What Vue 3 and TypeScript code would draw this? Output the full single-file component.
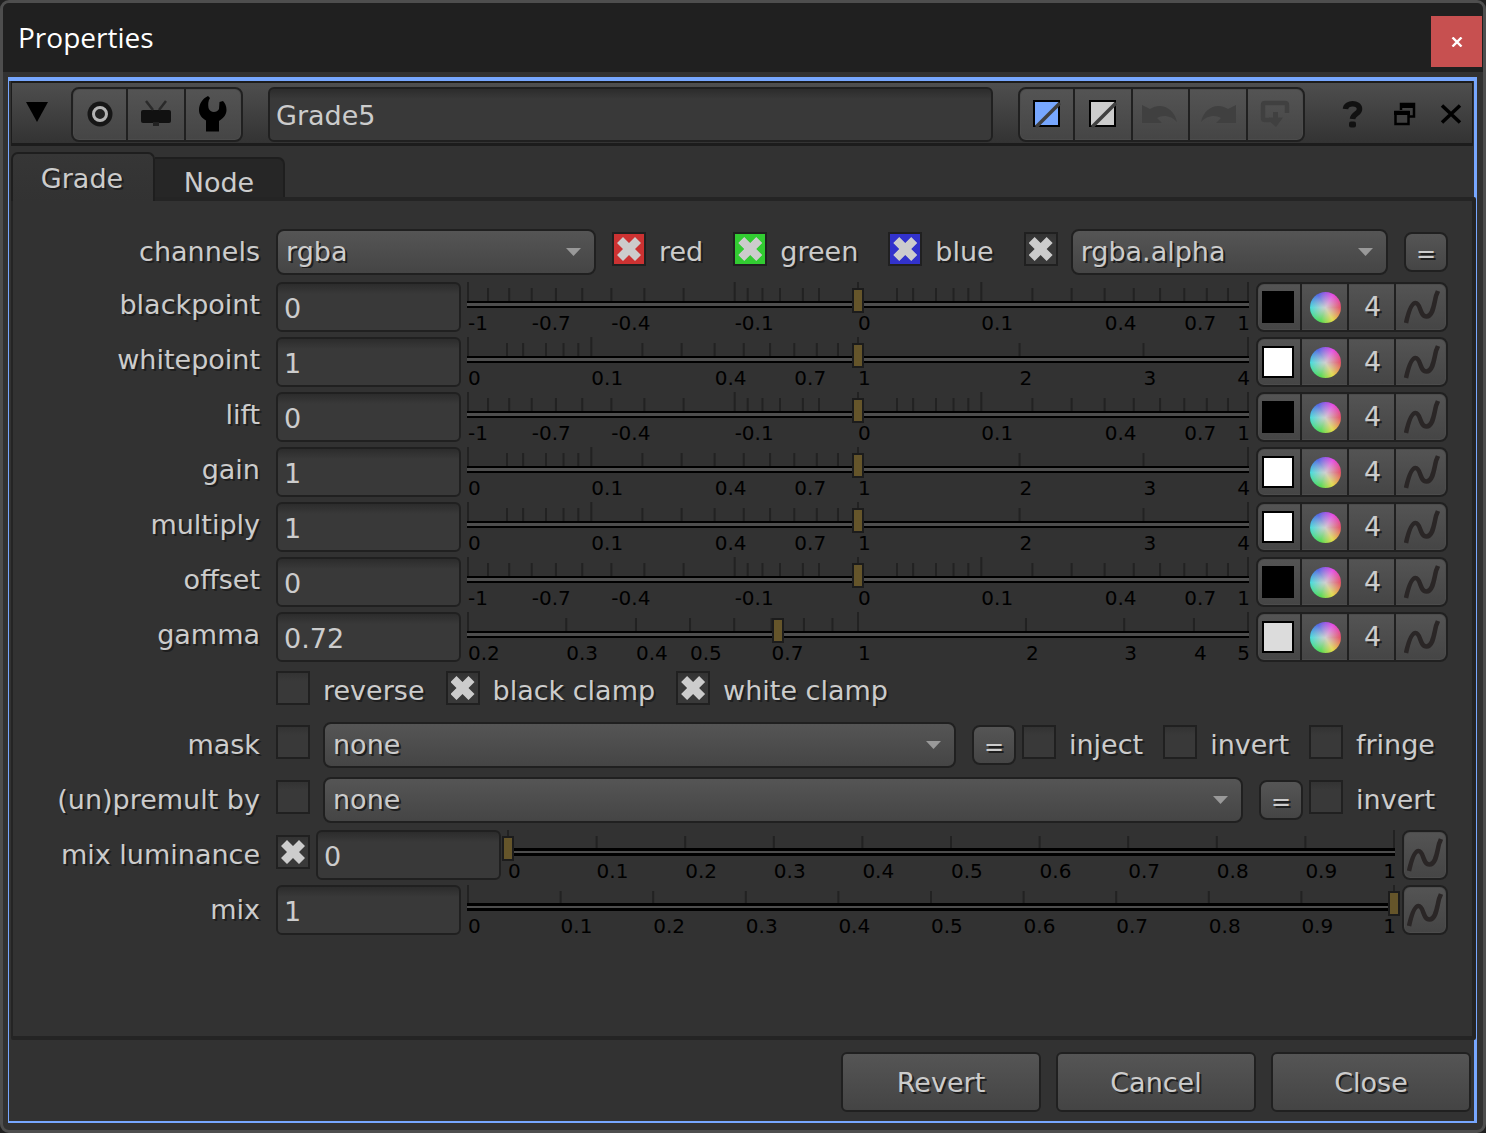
<script setup lang="ts">
import { reactive, ref } from 'vue'

type Scale = (v: number) => number
interface Axis {
  pos: Scale
  ticks: number[]
  tall: number[]
  labels: number[]
}
interface Knob {
  name: string
  value: string
  axis: Axis
  swatch: string
}

const signedRoot: Scale = (v) => 0.5 + (Math.sign(v) * Math.sqrt(Math.abs(v))) / 2
const root: Scale = (v) => Math.sqrt(v) / 2
const log5: Scale = (v) => 0.5 + Math.log(v) / Math.log(5) / 2
const linear: Scale = (v) => v

const minor = [0.01, 0.02, 0.04, 0.06, 0.08, 0.2, 0.3, 0.4, 0.5, 0.6, 0.7, 0.8, 0.9]

const offsetAxis: Axis = {
  pos: signedRoot,
  ticks: [...minor, ...minor.map((v) => -v)],
  tall: [-1, -0.1, 0, 0.1, 1],
  labels: [-1, -0.7, -0.4, -0.1, 0, 0.1, 0.4, 0.7, 1],
}
const gainAxis: Axis = {
  pos: root,
  ticks: [...minor, 2, 3],
  tall: [0, 0.1, 1, 4],
  labels: [0, 0.1, 0.4, 0.7, 1, 2, 3, 4],
}
const gammaAxis: Axis = {
  pos: log5,
  ticks: [0.3, 0.4, 0.5, 0.6, 0.7, 0.8, 0.9, 2, 3, 4],
  tall: [0.2, 1, 5],
  labels: [0.2, 0.3, 0.4, 0.5, 0.7, 1, 2, 3, 4, 5],
}
const tenths = [0.1, 0.2, 0.3, 0.4, 0.5, 0.6, 0.7, 0.8, 0.9]
const mixAxis: Axis = {
  pos: linear,
  ticks: tenths,
  tall: [0, 1],
  labels: [0, ...tenths, 1],
}

const knobs = reactive<Knob[]>([
  { name: 'blackpoint', value: '0', axis: offsetAxis, swatch: '#000' },
  { name: 'whitepoint', value: '1', axis: gainAxis, swatch: '#fff' },
  { name: 'lift', value: '0', axis: offsetAxis, swatch: '#000' },
  { name: 'gain', value: '1', axis: gainAxis, swatch: '#fff' },
  { name: 'multiply', value: '1', axis: gainAxis, swatch: '#fff' },
  { name: 'offset', value: '0', axis: offsetAxis, swatch: '#000' },
  { name: 'gamma', value: '0.72', axis: gammaAxis, swatch: '#dcdcdc' },
])
const mixes = reactive([
  { id: 'mix-luminance', name: 'mix luminance', value: '0', toggle: true },
  { id: 'mix', name: 'mix', value: '1', toggle: false },
])

const nodeName = ref('Grade5')
const channels = [
  { name: 'red', cls: 'is-red' },
  { name: 'green', cls: 'is-green' },
  { name: 'blue', cls: 'is-blue' },
]
const clamps = [
  { name: 'reverse', on: false },
  { name: 'black clamp', on: true },
  { name: 'white clamp', on: true },
]
const pct = (axis: Axis, v: number) => `${axis.pos(v) * 100}%`
const thumb = (axis: Axis, v: string) => Math.round(axis.pos(Number(v)) * 1000)
</script>

<template>
  <main class="window">
    <header class="titlebar">
      <h1>Properties</h1>
      <button class="win-close" aria-label="Close window">
        <svg width="12" height="10" viewBox="0 0 12 10"><path d="M1.500 0.500L10.500 9.500M10.500 0.500L1.500 9.500" stroke="#fff" stroke-width="2.400" /></svg>
      </button>
    </header>

    <section class="frame">
      <div class="toolbar">
        <button class="plain fold" aria-label="Collapse">
          <svg width="22" height="20" viewBox="0 0 22 20"><path d="M0 0H22L11 20Z" /></svg>
        </button>
        <div class="group tools">
          <button aria-label="Center node">
            <svg width="26" height="26" viewBox="0 0 26 26"><circle cx="13" cy="13" r="12.500" fill="#161616" /><circle cx="13" cy="13" r="6.500" fill="#222" stroke="#b4b4b4" stroke-width="3" /></svg>
          </button>
          <button aria-label="Viewer">
            <svg width="32" height="28" viewBox="0 0 32 28"><rect x="1" y="10" width="30" height="13" rx="2" fill="#111" /><path d="M6 1L13 10M26 1L19 10" stroke="#2a2a2a" stroke-width="2.500" /><rect x="13" y="22" width="6" height="4" fill="#222" /></svg>
          </button>
          <button aria-label="Settings">
            <svg width="28" height="36" viewBox="0 0 28 36"><path d="M9 0C3 3 0 8 0 14C0 19 3 22 7 24.500V35.500H20V25C25 22 27.500 18 27.500 14C27.500 10 26 7 24 5L20.500 6L20 13C18 17 11 17 9.500 12C9 8 9 5 11 2Z" /></svg>
          </button>
        </div>
        <input v-model="nodeName" class="field name" type="text" aria-label="Node name" />
        <div class="group history">
          <button aria-label="Node colour">
            <svg width="28" height="28" viewBox="0 0 28 28"><rect x="1" y="1" width="25" height="25" fill="#77a7ff" stroke="#000" stroke-width="2" /><path d="M3 27L27 3" stroke="#404040" stroke-width="3.500" /></svg>
          </button>
          <button aria-label="Viewer colour">
            <svg width="28" height="28" viewBox="0 0 28 28"><rect x="1" y="1" width="25" height="25" fill="#ccc" stroke="#000" stroke-width="2" /><path d="M3 27L27 3" stroke="#404040" stroke-width="3.500" /></svg>
          </button>
          <button aria-label="Undo" disabled>
            <svg width="36" height="20" viewBox="0 0 36 20"><path d="M0 1L8 5C19 -2 32 4 35 18C30 12 21 10 15 14L20 19H0Z" fill="#404040" /></svg>
          </button>
          <button aria-label="Redo" disabled>
            <svg width="36" height="20" viewBox="0 0 36 20"><path d="M36 1L28 5C17 -2 4 4 1 18C6 12 15 10 21 14L16 19H36Z" fill="#404040" /></svg>
          </button>
          <button aria-label="Revert knobs" disabled>
            <svg width="30" height="28" viewBox="0 0 30 28"><path d="M10 20H5Q3 20 3 18V5Q3 3 5 3H25Q27 3 27 5V13" fill="none" stroke="#404040" stroke-width="4.500" /><path d="M13 12H18V17.500H23L16 27L9 21V17.500H13Z" fill="#404040" /></svg>
          </button>
        </div>
        <button class="plain help" aria-label="Help">
          <svg width="22" height="28" viewBox="0 0 22 28"><path d="M3.500 9C4 2 17.500 2 17.500 9C17.500 14 11 13.500 10.500 19" fill="none" stroke="#111" stroke-width="5.500" /><rect x="7" y="21.500" width="7" height="6" rx="2" fill="#111" /></svg>
        </button>
        <button class="plain" aria-label="Float panel">
          <svg width="22" height="24" viewBox="0 0 22 24"><path d="M7 8V2H20V14.500H15" fill="none" stroke="#000" stroke-width="2.500" /><path d="M6 1H21V6H6Z" /><rect x="1.500" y="10" width="13" height="12" fill="#404040" stroke="#000" stroke-width="2.500" /><path d="M0 9H16V13H0Z" /></svg>
        </button>
        <button class="plain" aria-label="Close panel">
          <svg width="22" height="20" viewBox="0 0 22 20"><path d="M2 1.500L20 18.500M20 1.500L2 18.500" stroke="#000" stroke-width="3.500" /></svg>
        </button>
      </div>

      <div class="tabs" role="tablist">
        <button class="tab active" role="tab" aria-selected="true">Grade</button>
        <button class="tab" role="tab" aria-selected="false">Node</button>
      </div>

      <div class="pane" role="tabpanel">
        <div class="row">
          <label class="caption" for="channels">channels</label>
          <div class="controls">
            <div class="combo layer">
              <select id="channels"><option>rgba</option></select>
              <svg class="arrow" width="15" height="8" viewBox="0 0 15 8"><path d="M0 0H15L7.500 8Z" /></svg>
            </div>
            <div class="channel-set">
              <label v-for="c in channels" :key="c.name" class="check">
                <input type="checkbox" checked :class="c.cls" />{{ c.name }}
              </label>
              <label class="check"><input type="checkbox" checked aria-label="alpha enabled" /></label>
            </div>
            <div class="combo grow">
              <select aria-label="alpha channel"><option>rgba.alpha</option></select>
              <svg class="arrow" width="15" height="8" viewBox="0 0 15 8"><path d="M0 0H15L7.500 8Z" /></svg>
            </div>
            <button class="expr">=</button>
          </div>
        </div>

        <div v-for="k in knobs" :key="k.name" class="row knob">
          <label class="caption" :for="'knob-' + k.name">{{ k.name }}</label>
          <div class="controls">
            <input :id="'knob-' + k.name" v-model="k.value" class="field value" type="text" />
            <div class="slider">
              <svg class="ticks" aria-hidden="true">
                <rect v-for="t in k.axis.ticks" :key="'s' + t" :x="pct(k.axis, t)" y="6" width="2" height="13" />
                <rect v-for="t in k.axis.tall" :key="'t' + t" :x="pct(k.axis, t)" y="0" width="2" height="19" />
              </svg>
              <div class="groove"></div>
              <span v-for="t in k.axis.labels" :key="t" class="num" :style="{ left: pct(k.axis, t) }">{{ t }}</span>
              <input type="range" min="0" max="1000" :value="thumb(k.axis, k.value)" :aria-label="k.name + ' slider'" :aria-valuetext="k.value" />
            </div>
            <div class="group pickers">
              <button :aria-label="k.name + ' colour'"><i class="swatch" :style="{ background: k.swatch }"></i></button>
              <button :aria-label="k.name + ' colour wheel'"><i class="wheel"></i></button>
              <button>4</button>
              <button :aria-label="k.name + ' animation'">
                <svg width="36" height="34" viewBox="0 0 36 34"><path class="curve" d="M2 33C4 24 7 13 11.500 13C17 13 15.500 26.500 22.500 26.500C29 26.500 30 14 32 6L34 1" /></svg>
              </button>
            </div>
          </div>
        </div>

        <div class="row short">
          <span></span>
          <div class="controls clamps">
            <label v-for="c in clamps" :key="c.name" class="check"><input type="checkbox" :checked="c.on" />{{ c.name }}</label>
          </div>
        </div>

        <div class="row">
          <label class="caption" for="mask">mask</label>
          <div class="controls">
            <label class="check lead"><input type="checkbox" aria-label="mask enabled" /></label>
            <div class="combo grow">
              <select id="mask"><option>none</option></select>
              <svg class="arrow" width="15" height="8" viewBox="0 0 15 8"><path d="M0 0H15L7.500 8Z" /></svg>
            </div>
            <button class="expr">=</button>
            <div class="trail">
              <label class="check"><input type="checkbox" />inject</label>
              <label class="check"><input type="checkbox" />invert</label>
              <label class="check"><input type="checkbox" />fringe</label>
            </div>
          </div>
        </div>

        <div class="row">
          <label class="caption" for="premult">(un)premult by</label>
          <div class="controls">
            <label class="check lead"><input type="checkbox" aria-label="premult enabled" /></label>
            <div class="combo grow">
              <select id="premult"><option>none</option></select>
              <svg class="arrow" width="15" height="8" viewBox="0 0 15 8"><path d="M0 0H15L7.500 8Z" /></svg>
            </div>
            <button class="expr">=</button>
            <div class="trail">
              <label class="check"><input type="checkbox" /><span class="wide">invert</span></label>
            </div>
          </div>
        </div>

        <div v-for="m in mixes" :key="m.id" class="row">
          <label class="caption" :for="m.id">{{ m.name }}</label>
          <div class="controls">
            <label v-if="m.toggle" class="check tight"><input type="checkbox" checked aria-label="mix luminance enabled" /></label>
            <input :id="m.id" v-model="m.value" class="field value" type="text" />
            <div class="slider fine">
              <svg class="ticks" aria-hidden="true">
                <rect v-for="t in mixAxis.ticks" :key="t" :x="pct(mixAxis, t)" y="6" width="2" height="12" />
                <rect v-for="t in mixAxis.tall" :key="'t' + t" :x="pct(mixAxis, t)" y="0" width="2" height="18" />
              </svg>
              <div class="groove"></div>
              <span v-for="t in mixAxis.labels" :key="t" class="num" :style="{ left: pct(mixAxis, t) }">{{ t }}</span>
              <input type="range" min="0" max="1000" :value="thumb(mixAxis, m.value)" :aria-label="m.name + ' slider'" :aria-valuetext="m.value" />
            </div>
            <div class="group anim">
              <button :aria-label="m.name + ' animation'">
                <svg width="36" height="34" viewBox="0 0 36 34"><path class="curve" d="M2 33C4 24 7 13 11.500 13C17 13 15.500 26.500 22.500 26.500C29 26.500 30 14 32 6L34 1" /></svg>
              </button>
            </div>
          </div>
        </div>
      </div>

      <footer class="actions">
        <button>Revert</button>
        <button>Cancel</button>
        <button>Close</button>
      </footer>
    </section>
  </main>
</template>

<style>
body {
  margin: 0;
  background: #202020;
}
</style>

<style scoped>
* {
  box-sizing: border-box;
}
.window {
  display: flex;
  flex-direction: column;
  min-height: 100vh;
  border: 3px solid #4e4e4e;
  border-radius: 9px;
  background: #323232;
  color: #ccc;
  font: 27px/32px "DejaVu Sans", Verdana, sans-serif;
}
button,
input,
select {
  margin: 0;
  padding: 0;
  border: 0;
  color: inherit;
  font: inherit;
}
svg {
  display: block;
  flex: none;
}
.titlebar {
  display: flex;
  justify-content: space-between;
  align-items: center;
  height: 69px;
  padding: 8px 1px 0 15px;
  border-radius: 6px 6px 0 0;
  background: #202020;
}
h1 {
  margin: 0 0 10px;
  color: #fff;
  font: 28px/40px "Open Sans", "Segoe UI", sans-serif;
}
.win-close {
  display: flex;
  align-items: center;
  justify-content: center;
  width: 51px;
  height: 51px;
  background: #c75050;
}
.frame {
  display: flex;
  flex: 1;
  flex-direction: column;
  margin: 5px 6px 7px 5px;
  border: solid #77a7ff;
  border-width: 4px 3px 2px 1px;
}
.toolbar {
  display: flex;
  align-items: center;
  height: 65px;
  margin: 0 1px 0 2px;
  padding: 2px 10px 0 14px;
  border: solid #1c1c1c;
  border-width: 2px 1px 3px;
  background: linear-gradient(#4e4e4e, #333);
}
.plain {
  display: flex;
  align-items: center;
  justify-content: center;
  width: 22px;
  height: 40px;
  margin-left: 24px;
  background: none;
}
.fold {
  margin-left: 0;
}
.fold svg {
  margin-bottom: 5px;
}
.help {
  margin: 0 6px 0 37px;
}
.group {
  display: flex;
  border: 2px solid #202020;
  border-radius: 8px;
  background: linear-gradient(#545454, #454545);
  box-shadow: inset 0 0 0 1px #4c4c4c;
}
.group button {
  display: flex;
  flex: 1;
  align-items: center;
  justify-content: center;
  background: none;
  text-shadow: 2px 2px #1e1e1e;
}
.group button + button {
  border-left: 2px solid #202020;
}
.tools {
  width: 172px;
  height: 55px;
  margin: 0 25px 0 23px;
}
.history {
  width: 287px;
  height: 55px;
  margin-left: 25px;
}
.tools button:first-child,
.history button:first-child {
  flex: 0 0 53px;
}
.field {
  min-width: 0;
  padding: 3px 6px 0;
  border: 2px solid #202020;
  border-radius: 6px;
  outline: 0;
  background: linear-gradient(#2c2c2c, #393939 10px);
}
.name {
  flex: 1;
  height: 55px;
}
.tabs {
  display: flex;
  align-items: flex-end;
  height: 51px;
  margin-left: 2px;
}
.tab {
  width: 130px;
  height: 40px;
  padding-top: 8px;
  border: 2px solid #1e1e1e;
  border-width: 2px 2px 0 0;
  border-radius: 0 7px 0 0;
  background: #262626;
}
.tab.active {
  z-index: 1;
  width: 144px;
  height: 49px;
  margin-bottom: -4px;
  padding: 2px 2px 0 0;
  border-left-width: 2px;
  border-radius: 7px 7px 0 0;
  background: linear-gradient(#363636, #323232);
  text-shadow: 2px 2px #1e1e1e;
}
.pane {
  display: flex;
  flex: 1;
  flex-direction: column;
  gap: 5px;
  margin: 0 -2px 0 2px;
  padding: 26px 24px 26px 0;
  border: solid #242424;
  border-width: 4px 4px 4px 2px;
  border-radius: 2px;
}
.row {
  display: grid;
  grid-template-columns: 247px minmax(0, 1fr);
  column-gap: 16px;
  align-items: center;
  height: 50px;
}
.short {
  height: 48px;
}
.caption,
.check {
  text-shadow: 2px 2px #1e1e1e;
}
.caption {
  text-align: right;
  white-space: nowrap;
}
.knob .caption {
  padding-bottom: 4px;
}
.controls {
  display: flex;
  align-items: center;
}
.check {
  display: flex;
  align-items: center;
  gap: 13px;
  white-space: nowrap;
}
.check input {
  display: grid;
  place-items: center;
  width: 34px;
  height: 34px;
  margin-bottom: 6px;
  appearance: none;
  border: 2px solid #202020;
  background: linear-gradient(#333, #393939 8px);
}
.check input:checked::before {
  width: 24px;
  height: 24px;
  background: #ccc;
  clip-path: polygon(0 25%, 25% 0, 50% 25%, 75% 0, 100% 25%, 75% 50%, 100% 75%, 75% 100%, 50% 75%, 25% 100%, 0 75%, 25% 50%);
  content: "";
}
.check .is-red {
  background: #cc3232;
}
.check .is-green {
  background: #32cc32;
}
.check .is-blue {
  background: #3232cc;
}
.channel-set {
  display: flex;
  gap: 30px;
  margin: 0 13px 0 16px;
}
.clamps {
  gap: 21px;
}
.trail {
  display: flex;
  gap: 20px;
  padding: 0 13px 0 6px;
}
.lead {
  margin-right: 13px;
}
.tight {
  margin-right: 6px;
}
.combo {
  position: relative;
}
.layer {
  width: 320px;
}
.grow {
  flex: 1;
}
.combo select {
  display: block;
  width: 100%;
  height: 46px;
  padding: 0 40px 0 8px;
  appearance: none;
  border: 2px solid #202020;
  border-radius: 8px;
  background: linear-gradient(#555, #454545);
  text-shadow: 2px 2px #1e1e1e;
}
.arrow {
  position: absolute;
  top: 19px;
  right: 15px;
  fill: #999;
  pointer-events: none;
}
.expr {
  width: 44px;
  height: 40px;
  margin-left: 16px;
  padding-top: 4px;
  border: 2px solid #202020;
  border-radius: 8px;
  background: linear-gradient(#555, #454545);
  font-size: 24px;
  text-shadow: 2px 2px #1e1e1e;
}
.value {
  flex: none;
  width: 185px;
  height: 50px;
}
.slider {
  position: relative;
  flex: 1;
  height: 50px;
  margin: 0 8px 0 7px;
  padding-top: 19px;
}
.ticks {
  position: absolute;
  top: 0;
  left: 0;
  width: 100%;
  height: 19px;
  overflow: visible;
  fill: #222;
}
.ticks rect {
  transform: translateX(-1px);
}
.groove {
  height: 7px;
  margin: 0 -1px;
  border: solid #000;
  border-width: 2px 0;
  background: #4e4e4e;
}
.fine {
  padding-top: 18px;
}
.fine .groove {
  height: 8px;
  border-width: 3px 0;
}
.num {
  position: absolute;
  top: 29px;
  color: #000;
  font-size: 20px;
  line-height: 24px;
}
.num:last-of-type {
  left: auto !important;
  right: -2px;
}
.slider input {
  position: absolute;
  top: 6px;
  left: -6px;
  width: calc(100% + 12px);
  height: 25px;
  appearance: none;
  background: none;
}
.slider input::-webkit-slider-thumb {
  width: 12px;
  height: 25px;
  appearance: none;
  border: 2px solid #1c1c1c;
  background: #65552a;
}
.pickers {
  width: 192px;
  height: 50px;
}
.pickers button {
  padding: 0 0 0 2px;
}
.pickers button:first-child {
  flex: 0 0 42px;
  padding: 0 2px 0 0;
}
.pickers button:last-child {
  flex: 0 0 52px;
}
.anim {
  width: 46px;
  height: 50px;
}
.swatch {
  width: 32px;
  height: 32px;
  border: 2px solid #000;
}
.wheel {
  width: 31px;
  height: 31px;
  border-radius: 50%;
  background:
    radial-gradient(closest-side, #d0d0d0, #d0d0d000),
    conic-gradient(from 90deg, #e65064, #e6dc46 60deg, #50dc50 110deg, #46dcdc 180deg, #5064e6 240deg, #e646e6 300deg, #e65064);
}
.curve {
  fill: none;
  stroke: #2a2626;
  stroke-width: 4.5;
}
.actions {
  display: flex;
  justify-content: flex-end;
  gap: 15px;
  padding: 12px 3px 9px;
}
.actions button {
  width: 200px;
  height: 60px;
  padding-top: 2px;
  border: 2px solid #202020;
  border-radius: 6px;
  background: linear-gradient(#555, #444);
  text-shadow: 2px 2px #1e1e1e;
}
</style>
